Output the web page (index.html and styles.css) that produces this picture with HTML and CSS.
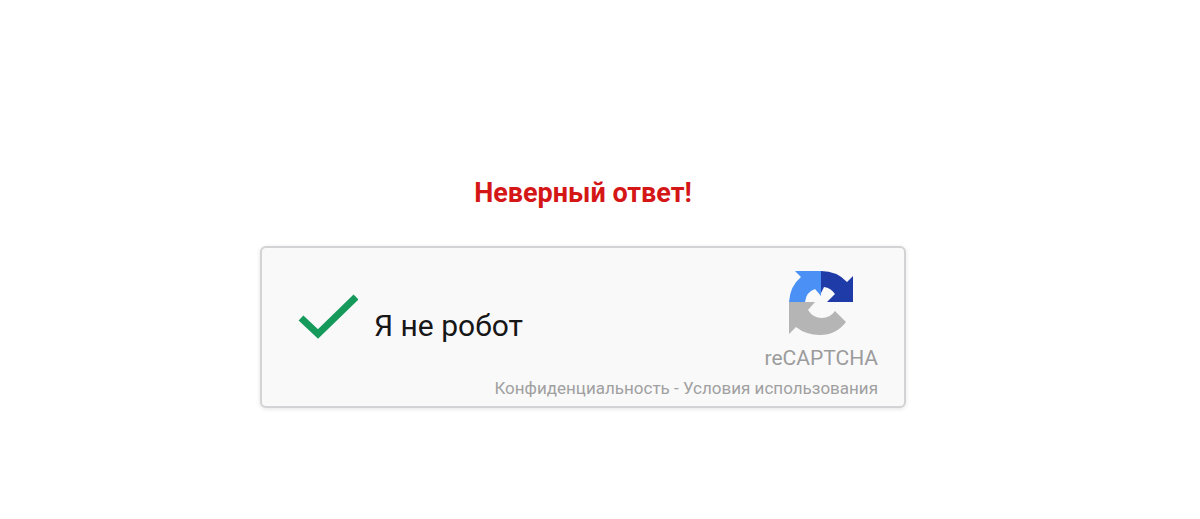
FILE: index.html
```html
<!DOCTYPE html>
<html lang="ru">
<head>
<meta charset="utf-8">
<meta name="viewport" content="width=device-width, initial-scale=1">
<title>Проверка</title>
<link rel="stylesheet" href="styles.css">
</head>
<body>
<main class="page">
  <p class="error" role="alert">Неверный ответ!</p>
  <section class="captcha">
    <div class="check">
      <span class="check-box">
        <input class="check-input" type="checkbox" id="robot" checked>
        <svg class="check-mark" viewBox="0 0 60 46" aria-hidden="true"><path d="M3 24 20 40 58 3" fill="none" stroke="#169a5b" stroke-width="7"/></svg>
      </span>
      <label class="check-label" for="robot">Я не робот</label>
    </div>
    <div class="brand">
      <svg class="logo" viewBox="8 9 65 66" aria-hidden="true">
        <path fill="#4a90f5" d="M14 10H40V35L34 28Q25 31 24 41H8Q9 25 20 16Z"/>
        <path fill="#1f3ba8" d="M40 10Q56 10 66 21L72 15V41H46L54 33Q50 27 43 26L40 32Z"/>
        <path fill="#b5b5b5" d="M8 41H34L27 49Q32 57 41 57Q49 57 54 50L65 61Q55 74 39 74Q25 74 15 66L8 73Z"/>
      </svg>
      <span class="brand-name">reCAPTCHA</span>
    </div>
    <nav class="links"><a href="#privacy">Конфиденциальность</a> - <a href="#terms">Условия использования</a></nav>
  </section>
</main>
</body>
</html>
```
FILE: styles.css
```css
body {
  margin: 0;
  background: #fff;
  font-family: Roboto, "Liberation Sans", sans-serif;
}

.page {
  display: flex;
  flex-direction: column;
  align-items: center;
  gap: 36px;
  padding: 176px 34px 32px 0;
}

.error {
  margin: 0;
  color: #d51616;
  font-size: 27px;
  font-weight: 700;
  line-height: 34px;
}

.captcha {
  box-sizing: border-box;
  width: 100%;
  max-width: 646px;
  display: grid;
  grid-template-columns: 1fr auto;
  padding: 22px 26px 4px 36px;
  border: 2px solid #d3d3d5;
  border-radius: 6px;
  background: #f9f9fa;
  box-shadow: 0 1px 4px #e4e4e6;
}

.check {
  display: flex;
  gap: 16px;
  padding-top: 24px;
}

.check-box {
  display: grid;
  width: 60px;
  height: 46px;
}

.check-input,
.check-mark {
  grid-area: 1 / 1;
  width: 60px;
  height: 46px;
  margin: 0;
}

.check-input {
  appearance: none;
}

.check-mark {
  visibility: hidden;
  pointer-events: none;
}

.check-input:checked + .check-mark {
  visibility: visible;
}

.check-label {
  padding-top: 14px;
  color: #171717;
  font-size: 30px;
  line-height: 36px;
}

.brand {
  display: flex;
  flex-direction: column;
  align-items: center;
  gap: 8px;
}

.logo {
  width: 65px;
  height: 66px;
}

.brand-name {
  color: #9c9c9c;
  font-size: 21px;
  line-height: 28px;
}

.links {
  grid-column: 1 / -1;
  padding-top: 2px;
  color: #a0a0a0;
  font-size: 17px;
  line-height: 28px;
  text-align: right;
}

.links a {
  color: inherit;
  text-decoration: none;
}
```
